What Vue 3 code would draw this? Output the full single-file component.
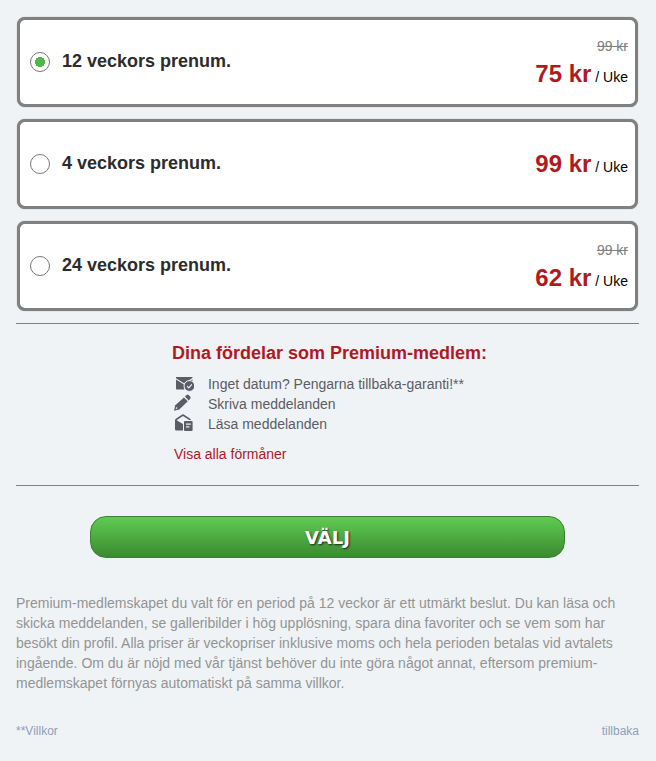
<script setup>
import { ref } from 'vue'

const selected = ref('w12')

const plans = [
  { id: 'w12', name: '12 veckors prenum.', oldPrice: '99 kr', price: '75 kr' },
  { id: 'w4', name: '4 veckors prenum.', oldPrice: '', price: '99 kr' },
  { id: 'w24', name: '24 veckors prenum.', oldPrice: '99 kr', price: '62 kr' },
]
</script>

<template>
  <main class="page">
    <form class="form" @submit.prevent>
      <div class="plans">
        <label v-for="plan in plans" :key="plan.id" class="plan">
          <input v-model="selected" class="radio" type="radio" name="plan" :value="plan.id" />
          <span class="name">{{ plan.name }}</span>
          <span class="cost">
            <s v-if="plan.oldPrice" class="old">{{ plan.oldPrice }}</s>
            <span class="current"><strong class="price">{{ plan.price }}</strong> / Uke</span>
          </span>
        </label>
      </div>

      <section class="benefits">
        <div class="benefits-inner">
          <h2 class="heading">Dina fördelar som Premium-medlem:</h2>
          <ul class="list">
            <li class="item">
              <svg class="icon" viewBox="0 0 20 20" aria-hidden="true">
                <path d="M2 3H18.4V4L10 9.2L2 4.2Z" />
                <path d="M2 5.4L10 10.4L18.4 5.2V9H14L10.4 12V15.6H3.2A1.2 1.2 0 0 1 2 14.4Z" />
                <circle class="badge" cx="15.4" cy="12" r="5.4" />
                <path class="cut" d="M13.2 12.2L14.8 13.8L17.8 10.4" />
              </svg>
              Inget datum? Pengarna tillbaka-garanti!**
            </li>
            <li class="item">
              <svg class="icon" viewBox="0 0 20 20" aria-hidden="true">
                <path d="M0 16.8L1.3 11.2L9.9 3.4L13.8 7.3L5.3 15.5Z" />
                <path d="M10.9 2.5L12.6 1Q13.6 0.2 14.7 1.1L16.2 2.6Q17.1 3.7 16.2 4.8L14.7 6.4Z" />
                <path class="cut" d="M2 14.6L3.1 13.5" />
              </svg>
              Skriva meddelanden
            </li>
            <li class="item">
              <svg class="icon" viewBox="0 0 20 20" aria-hidden="true">
                <path d="M1 6.2Q1 5.2 1.8 4.7L8.2 0.5Q9 0 9.8 0.5L16.2 4.7Q16.8 5.2 17 6H15.2L9 2.1L2.6 6.2L9 10V16.4H2.2Q1 16.4 1 15.2Z" />
                <path d="M11 6.9H17.6Q18.6 6.9 18.6 7.9V16Q18.6 17 17.6 17H11Q10 17 10 16V7.9Q10 6.9 11 6.9Z" />
                <path class="cut" d="M12 10.2H16.8M12 12.8H15.4" />
              </svg>
              Läsa meddelanden
            </li>
          </ul>
          <a class="more" href="#">Visa alla förmåner</a>
        </div>
      </section>

      <button class="submit" type="submit">VÄLJ</button>
    </form>

    <p class="terms">
      Premium-medlemskapet du valt för en period på 12 veckor är ett utmärkt beslut. Du kan läsa och
      skicka meddelanden, se galleribilder i hög upplösning, spara dina favoriter och se vem som har
      besökt din profil. Alla priser är veckopriser inklusive moms och hela perioden betalas vid
      avtalets ingående. Om du är nöjd med vår tjänst behöver du inte göra något annat, eftersom
      premium-medlemskapet förnyas automatiskt på samma villkor.
    </p>

    <footer class="footer">
      <a href="#">**Villkor</a>
      <a href="#">tillbaka</a>
    </footer>
  </main>
</template>

<style>
body {
  background: #eff3f6;
}
</style>

<style scoped>
.page {
  box-sizing: border-box;
  padding: 17px 17px 20px 16px;
  font-family: "Liberation Sans", Arial, sans-serif;
  font-size: 14px;
  line-height: 20px;
  color: #000;
}

.plans {
  display: grid;
  gap: 12px;
  padding: 0 1px;
}

.plan {
  display: flex;
  align-items: center;
  box-sizing: border-box;
  min-height: 90px;
  padding: 0 7px 0 10px;
  border: 3px solid #808080;
  border-radius: 8px;
  background: #fff;
  box-shadow: 0 0 1px #808080;
  cursor: pointer;
}

.radio {
  appearance: none;
  box-sizing: border-box;
  flex: none;
  width: 20px;
  height: 20px;
  margin: 0;
  border: 1px solid #777;
  border-radius: 50%;
  background: #fff;
}

.radio:checked {
  background: radial-gradient(circle, #51b848 0 5px, #fff 5px);
}

.name {
  flex: 1;
  margin-left: 12px;
  padding-bottom: 2px;
  font-size: 18px;
  font-weight: bold;
  color: #2c2c2c;
}

.cost {
  display: flex;
  flex-direction: column;
  align-items: flex-end;
  padding-top: 2px;
}

.old {
  padding-top: 4px;
  color: #808080;
}

.current {
  line-height: 36px;
}

.price {
  font-size: 24px;
  color: #b01a1e;
}

.benefits {
  display: flex;
  justify-content: center;
  margin-top: 12px;
  padding: 19px 0 21px 4px;
  border-top: 1px solid #808080;
  border-bottom: 1px solid #808080;
}

.heading {
  margin: 0 0 11px;
  font-size: 18px;
  line-height: 20px;
  color: #b01a1e;
}

.list {
  margin: 0 0 10px;
  padding: 0 0 0 2px;
  list-style: none;
}

.item {
  display: flex;
  align-items: center;
  gap: 14px;
  color: #5b5c63;
}

.icon {
  width: 20px;
  height: 20px;
  fill: #5b5c66;
}

.cut {
  fill: none;
  stroke: #eff3f6;
  stroke-width: 1.2;
}

.badge {
  stroke: #eff3f6;
  stroke-width: 1;
}

.more {
  margin-left: 2px;
  color: #b01a1e;
  text-decoration: none;
}

.submit {
  display: block;
  box-sizing: border-box;
  width: calc(100% - 148px);
  height: 42px;
  margin: 30px auto 0;
  padding: 1px 0 0;
  border: 1px solid #36842c;
  border-radius: 16px;
  background: linear-gradient(#60cb52, #3b8a30);
  font-family: Tahoma, "DejaVu Sans", sans-serif;
  font-size: 18px;
  font-weight: bold;
  color: #fff;
  text-shadow: 1px 1px 2px #222;
  cursor: pointer;
}

.terms {
  margin: 35px 0 28px;
  color: #939393;
}

.footer {
  display: flex;
  justify-content: space-between;
  font-size: 12px;
}

.footer a {
  color: #8e9ebb;
  text-decoration: none;
}
</style>
